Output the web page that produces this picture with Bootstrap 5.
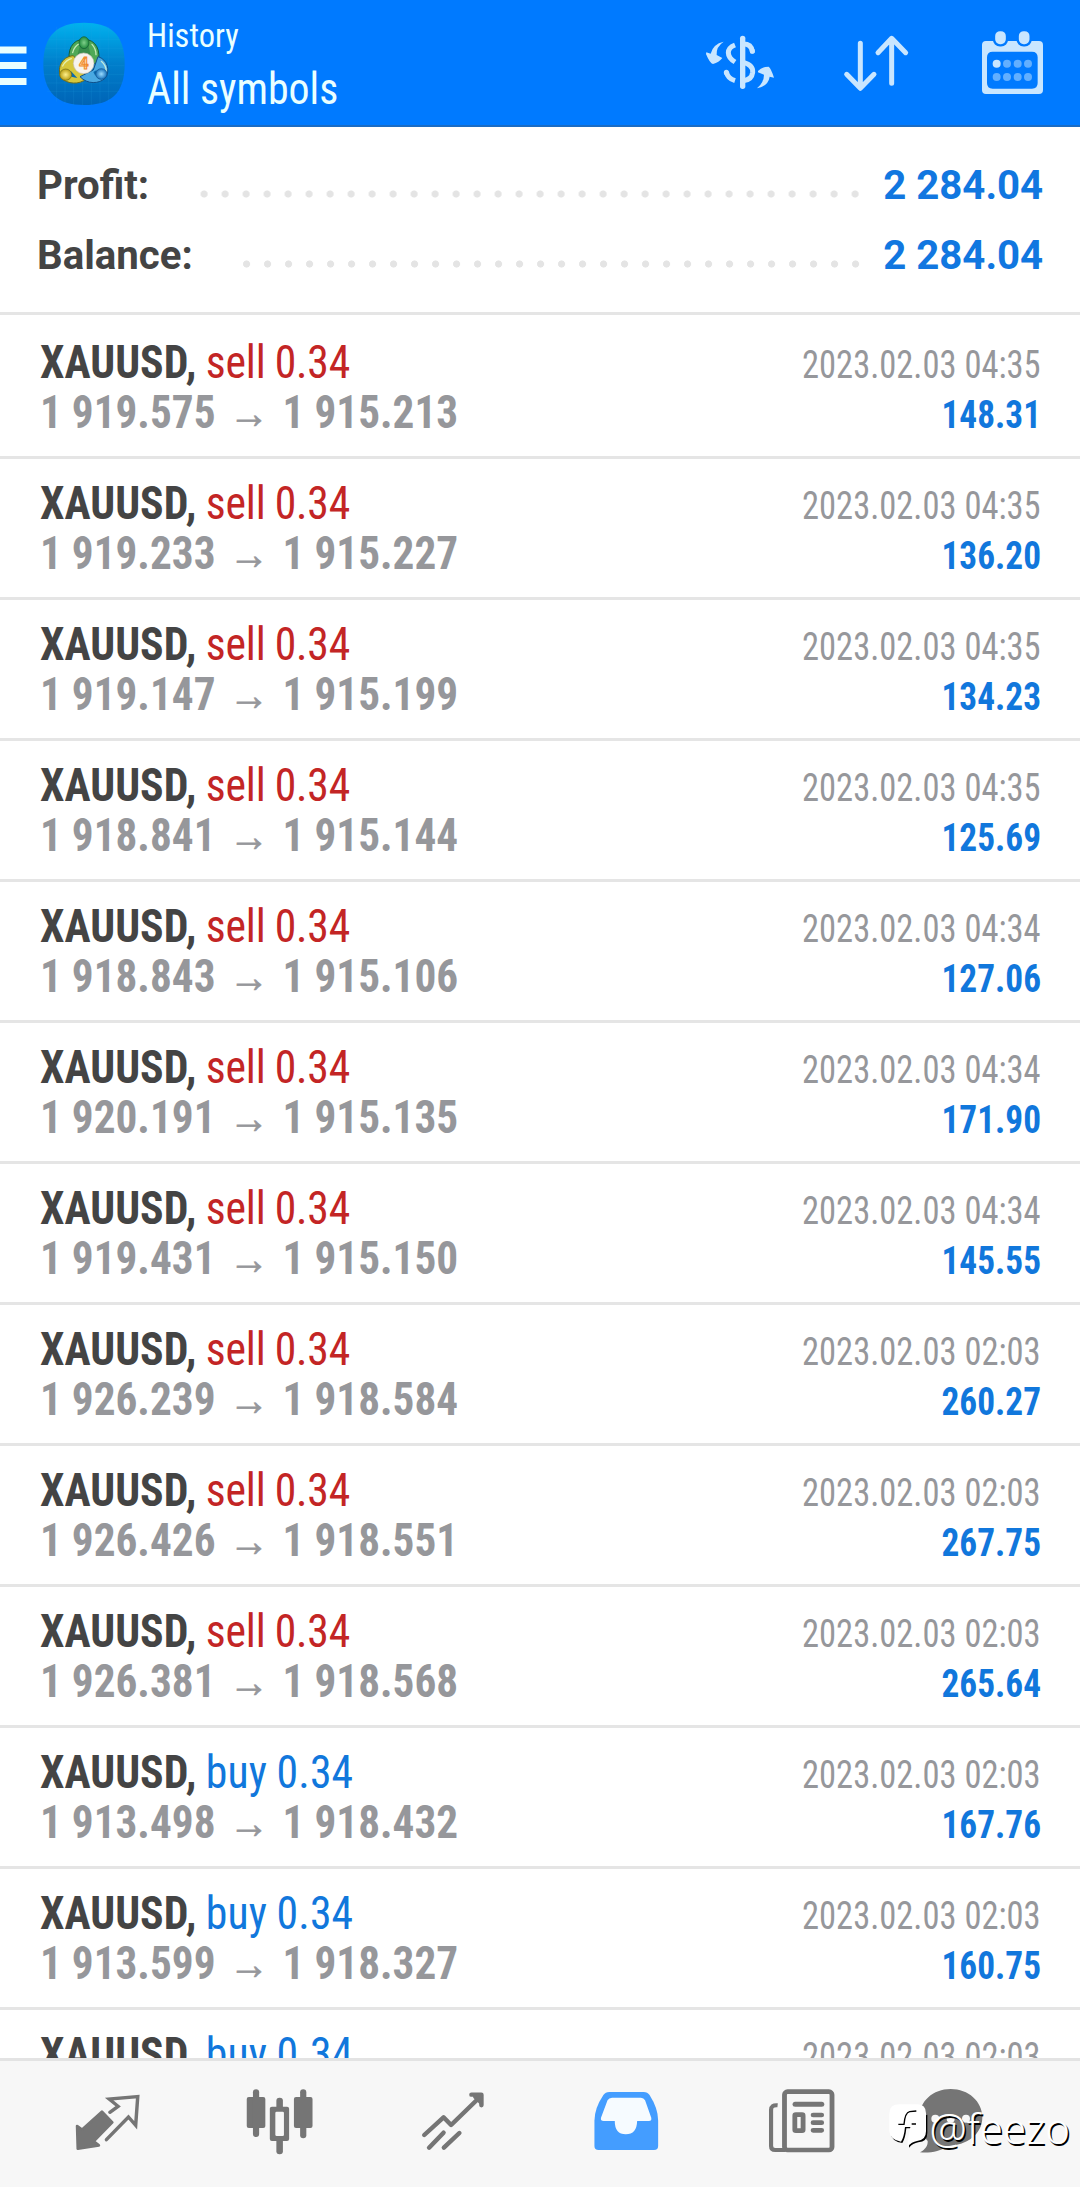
<!DOCTYPE html>
<html lang="en">
<head>
<meta charset="utf-8">
<meta name="viewport" content="width=device-width, initial-scale=1">
<title>History</title>
<link rel="stylesheet" href="https://cdn.jsdelivr.net/npm/bootstrap@5.3.0/dist/css/bootstrap.min.css">
<style>
  body { font-family: Roboto, "Liberation Sans", sans-serif; color: #444; background: #fff; }
  svg { display: block; flex: none; }
  .app { height: 2187px; }
  .topbar { height: 127px; background: #007aff; border-bottom: 2px solid #1b6cc4; color: #eaffff; }
  .narrow { font-stretch: 75%; white-space: nowrap; }
  .titles { margin-left: 19.5px; padding-top: 12px; font-weight: 430; }
  .title-small { font-size: 34px; line-height: 46px; transform: scaleX(.955); transform-origin: left; }
  .title-big { font-size: 45px; line-height: 62px; transform: scaleX(.93); transform-origin: left; }
  .summary { padding: 23px 39px 22px 37px; border-bottom: 3px solid #e5e5e5; font-size: 41px; line-height: 70px; font-weight: 700; }
  .summary .caption-text { transform: scaleX(.98); transform-origin: left; }
  .summary .value { color: #1177e0; width: 161px; transform: scaleX(.98); transform-origin: right; white-space: nowrap; }
  .dots { height: 8px; margin: 39.5px 14px 0 39px; background: radial-gradient(circle at center, #e4e4e4 3.2px, transparent 3.9px) right center / 21px 8px repeat-x; }
  .deals { padding-top: 3px; min-height: 0; }
  .deal { height: 141px; padding: 19px 39px 0 40px; border-bottom: 3px solid #e5e5e5; flex: none; line-height: 50px; }
  .deal-line { height: 50px; }
  .from-left { transform-origin: left; }
  .from-right { transform-origin: right; }
  .symbol { font-size: 47px; transform: scaleX(.93); word-spacing: -.8px; }
  .symbol b { font-weight: 700; }
  .sell { color: #c32525; font-weight: 430; letter-spacing: -.2px; }
  .buy { color: #1177dc; font-weight: 430; letter-spacing: .15px; }
  .prices { font-size: 46px; font-weight: 700; color: #96979b; transform: scaleX(.94); }
  .arrow { width: 71.4px; font-size: 43px; font-weight: 400; -webkit-text-stroke: .7px #96979b; }
  .time { font-size: 39px; color: #96979b; transform: scaleX(.885); }
  .profit { font-size: 38px; font-weight: 700; color: #1177dc; transform: scaleX(.93); }
  .tabs { height: 129px; background: #f7f7f7; border-top: 3px solid #e3e3e3; padding-left: 58px; padding-top: 19px; }
  .tabs svg { margin-right: 73.4px; }
  .tabs svg:nth-child(5) { margin-right: 50px; }
  .tabs svg:last-of-type { margin-right: 0; }
  .watermark { right: 10px; bottom: 32px; height: 54px; color: #fff; font: 300 42px/54px "Noto Sans", sans-serif; text-shadow: 1.5px 1.5px 0 #000; white-space: nowrap; }
</style>
<script src="https://cdn.jsdelivr.net/npm/bootstrap@5.3.0/dist/js/bootstrap.bundle.min.js"></script>
</head>
<body>
<div class="app d-flex flex-column overflow-hidden position-relative">

  <header class="topbar d-flex flex-shrink-0">
    <svg width="27" height="125" viewBox="0 0 27 125" fill="#eaffff"><path d="M0 46.500h26.500v7H0zM0 62h26.500v7H0zM0 78h26.500v7H0z"/></svg>
    <svg width="100" height="125" viewBox="27 0 100 125">
      <defs>
        <linearGradient id="tile" x1="0" y1="0" x2="0" y2="1"><stop offset="0" stop-color="#00b2ee"/><stop offset=".5" stop-color="#007ecb"/><stop offset="1" stop-color="#0064b6"/></linearGradient>
        <radialGradient id="gr"><stop offset="0" stop-color="#7fd08a"/><stop offset="1" stop-color="#1f8a3c"/></radialGradient>
        <radialGradient id="ye"><stop offset="0" stop-color="#fff08a"/><stop offset="1" stop-color="#b79d14"/></radialGradient>
        <radialGradient id="bl"><stop offset="0" stop-color="#9adcff"/><stop offset="1" stop-color="#1873bd"/></radialGradient>
      </defs>
      <g transform="translate(30 10) scale(.33333)">
        <path d="M162 38C240 38 284 70 284 162S240 285 162 285 40 250 40 162 84 38 162 38Z" fill="url(#tile)"/>
        <path d="M80 50V275M105 42V282M131 40V285M158 40V285M184 40V285M210 42V282M236 50V275M45 115H280M41 141H283M41 167H283M41 193H283M45 219H279M52 244H270M55 88H270M75 63H250" stroke="#27a4df" stroke-opacity=".25" stroke-width="2" fill="none"/>
        <g stroke-width="3">
          <path d="M162 88C198 88 214 122 204 160H120C110 122 126 88 162 88Z" fill="#4fa957" stroke="#145c35"/>
          <path d="M130 137C92 140 80 178 94 204C112 222 146 226 170 206L150 160Z" fill="#d6c73c" stroke="#6d6a18"/>
          <path d="M204 140C232 148 242 182 226 204C208 222 172 224 150 200L190 180Z" fill="#4aa9e2" stroke="#0f4f8a"/>
        </g>
        <path d="M128 128Q134 106 150 101M98 168Q108 150 124 146M214 154Q230 168 228 184M186 103Q198 116 198 134" fill="none" stroke="#eaffd8" stroke-opacity=".75" stroke-width="4" stroke-linecap="round"/>
        <path d="M122 182L142 204L124 200ZM190 186L200 180L196 198Z" fill="#0b6bb0"/>
        <path d="M150 106h25l8 34h-42z" fill="#398e4c"/>
        <ellipse cx="162" cy="98" rx="15" ry="18" fill="url(#gr)" stroke="#145c35" stroke-width="2"/>
        <ellipse cx="107" cy="194" rx="18" ry="17" fill="url(#ye)" stroke="#6d6a18" stroke-width="2"/>
        <ellipse cx="214" cy="192" rx="17" ry="16" fill="url(#bl)" stroke="#0f4f8a" stroke-width="2"/>
        <circle cx="161" cy="160" r="31" fill="#f6f3ee" stroke="#c9c3b6" stroke-width="2"/>
        <text x="161" y="178" text-anchor="middle" font-family="Roboto" font-weight="700" font-size="50" fill="#ffd9a8" stroke="#f08a2c" stroke-width="3">4</text>
      </g>
    </svg>
    <div class="titles narrow">
      <div class="title-small">History</div>
      <div class="title-big">All symbols</div>
    </div>
    <svg class="ms-auto" width="400" height="125" viewBox="680 0 400 125">
      <g transform="translate(680 0) scale(.33333)" fill="#c9e6ff">
        <g transform="translate(60 75)" fill="none" stroke="#c9e6ff" stroke-width="15">
          <path d="M128 40V184" stroke-width="16" stroke-linecap="round"/>
          <path d="M105 60Q85 68 85 83T105 111"/>
          <path d="M79 140Q83 160 105 167"/>
          <path d="M130 57Q154 57 157 79" stroke-linecap="round"/>
          <path d="M130 112Q160 120 158 142Q155 165 130 167"/>
          <path d="M79 142v1M157 77v1" stroke-linecap="round"/>
          <path d="M71 50Q48 65 50 90L67 99Q57 112 39 117Q30 116 18 87L19 82L32 86Q39 57 71 50Z" fill="#c9e6ff" stroke="none"/>
          <path d="M171 190Q192 172 192 149L174 142V138Q187 125 206 125Q213 130 222 158L209 155Q205 183 171 190Z" fill="#c9e6ff" stroke="none"/>
        </g>
        <g fill="none" stroke="#c9e6ff" stroke-width="15" stroke-linecap="round" stroke-linejoin="round">
          <path d="M541 130V264M500 223L541 265L582 223M635 250V116M594 158L635 115L677 158"/>
        </g>
        <path fill-rule="evenodd" d="M918 123H1077Q1089 123 1089 135V270Q1089 282 1077 282H918Q906 282 906 270V135Q906 123 918 123ZM938 155Q921 155 921 172V249Q921 266 938 266H1056Q1073 266 1073 249V172Q1073 155 1056 155Z"/>
        <rect x="942" y="90" width="39" height="46" rx="18" stroke="#007aff" stroke-width="7"/>
        <rect x="1013" y="90" width="39" height="46" rx="18" stroke="#007aff" stroke-width="7"/>
        <g fill="#62afff"><circle cx="981" cy="191" r="12"/><circle cx="1013" cy="191" r="12"/><circle cx="1044" cy="191" r="12"/><circle cx="950" cy="231" r="12"/><circle cx="981" cy="231" r="12"/><circle cx="1013" cy="231" r="12"/><circle cx="1044" cy="231" r="12"/></g>
        <circle cx="950" cy="191" r="12"/>
      </g>
    </svg>
  </header>

  <section class="summary flex-shrink-0">
    <div class="d-flex"><span class="caption-text">Profit:</span><span class="dots flex-grow-1"></span><span class="value text-end">2 284.04</span></div>
    <div class="d-flex"><span class="caption-text">Balance:</span><span class="dots flex-grow-1"></span><span class="value text-end">2 284.04</span></div>
  </section>

  <main class="deals narrow d-flex flex-column flex-grow-1 overflow-hidden" id="deals"></main>

  <nav class="tabs d-flex flex-shrink-0">
    <svg width="100" height="90" viewBox="58 80 100 90"><g transform="scale(.34436 .33333)" fill="#757575">
      <path d="M296 335L326 367L272 424L287 436L226 446L224 378L238 389Z" stroke="#757575" stroke-width="8" stroke-linejoin="round"/>
      <path d="M319 337L343 319L317 297L400 290L394 376L373 351L309 419" fill="none" stroke="#757575" stroke-width="10" stroke-linecap="round"/>
    </g></svg>
    <svg width="100" height="90" viewBox="231.500 80 100 90"><g transform="scale(.34436 .33333)" fill="#757575">
      <rect x="718" y="291" width="54" height="93" rx="6"/><rect x="736" y="268" width="18" height="143" rx="9"/>
      <rect x="855" y="291" width="54" height="93" rx="6"/><rect x="873" y="268" width="18" height="147" rx="9"/>
      <rect x="804" y="293" width="19" height="170" rx="9"/><rect x="785" y="320" width="56" height="103" rx="6"/><rect x="801" y="335" width="25" height="73" rx="4" fill="#f7f7f7"/>
    </g></svg>
    <svg width="100" height="90" viewBox="405 80 100 90"><g transform="scale(.34436 .33333)" fill="none" stroke="#757575" stroke-width="13" stroke-linecap="round" stroke-linejoin="round">
      <path d="M1232 405L1288 352L1310 375L1396 289M1246 443L1288 398M1289 443L1334 399"/><path d="M1369 284H1398V316"/><path d="M1380 290L1396 306V287Z"/>
    </g></svg>
    <svg width="100" height="90" viewBox="579 80 100 90"><g transform="translate(540) scale(.34436 .33333)">
      <path d="M204 276H304Q315 276 321 285Q346 325 346 362V438Q346 450 334 450H173Q161 450 161 438V362Q161 325 187 285Q193 276 204 276Z" fill="#449dff"/>
      <path d="M212 293H296Q304 293 308 301L326 353Q328 363 319 363H285Q284 403 252 403T220 363H188Q178 363 180 353L199 301Q203 293 212 293Z" fill="#f6fbff"/>
    </g></svg>
    <svg width="100" height="90" viewBox="752 80 100 90"><g transform="translate(540) scale(.34436 .33333)" fill="none" stroke="#757575" stroke-width="14">
      <rect x="710" y="275" width="138" height="175" rx="9"/><path d="M690 316Q671 314 671 330V438Q671 450 683 450H712" stroke-width="12"/>
      <path d="M741 313H818" stroke-linecap="round" stroke-width="15"/><path d="M793 345H818M793 368H818M793 391H818" stroke-linecap="round"/><rect x="740" y="344" width="24" height="48" rx="3"/>
    </g></svg>
    <svg width="100" height="90" viewBox="902 80 100 90"><g transform="translate(880 80) scale(.33333)">
      <path d="M212 27C265 27 307 64 307 112C307 165 258 196 205 198C180 214 150 220 120 217C137 208 144 196 143 183C125 165 118 140 118 112C118 64 159 27 212 27Z" fill="#757575"/>
      <g fill="#f7f7f7"><circle cx="166" cy="116" r="12"/><circle cx="212" cy="116" r="12"/><circle cx="258" cy="116" r="12"/></g>
    </g></svg>
    <div class="watermark position-absolute d-flex">
      <svg width="42" height="54" viewBox="887 105 42 54"><g transform="translate(880 80) scale(.33333)">
        <path d="M135 112V166Q135 193 108 195Q92 198 80 211V196L88 153H72Q69 184 60 197Q27 192 25 166V150Z" fill="#000" transform="translate(4 4)"/>
        <path d="M55 85H108Q135 85 135 112V166Q135 193 108 195Q92 198 80 211V196L88 153H72Q69 184 60 197Q27 192 25 166V112Q25 85 55 85Z" fill="#fff"/>
        <path d="M52 145H69Q72 110 86 107L106 105M92 144H105" fill="none" stroke="#000" stroke-width="4"/>
      </g></svg><span>@feezo</span>
    </div>
  </nav>
</div>

<script>
  const deals = [
    ['sell', '1 919.575', '1 915.213', '04:35', '148.31'],
    ['sell', '1 919.233', '1 915.227', '04:35', '136.20'],
    ['sell', '1 919.147', '1 915.199', '04:35', '134.23'],
    ['sell', '1 918.841', '1 915.144', '04:35', '125.69'],
    ['sell', '1 918.843', '1 915.106', '04:34', '127.06'],
    ['sell', '1 920.191', '1 915.135', '04:34', '171.90'],
    ['sell', '1 919.431', '1 915.150', '04:34', '145.55'],
    ['sell', '1 926.239', '1 918.584', '02:03', '260.27'],
    ['sell', '1 926.426', '1 918.551', '02:03', '267.75'],
    ['sell', '1 926.381', '1 918.568', '02:03', '265.64'],
    ['buy', '1 913.498', '1 918.432', '02:03', '167.76'],
    ['buy', '1 913.599', '1 918.327', '02:03', '160.75'],
    ['buy', '', '', '02:03', '']
  ];
  document.getElementById('deals').innerHTML = deals.map(([side, open, close, time, profit]) => `
    <article class="deal">
      <div class="deal-line d-flex justify-content-between align-items-baseline">
        <div class="symbol from-left"><b>XAUUSD,</b> <span class="${side}">${side} 0.34</span></div>
        <div class="time from-right">2023.02.03 ${time}</div>
      </div>
      ${open && `<div class="deal-line d-flex justify-content-between align-items-baseline">
        <div class="prices from-left d-flex align-items-baseline"><span>${open}</span><span class="arrow text-center">→</span><span>${close}</span></div>
        <div class="profit from-right">${profit}</div>
      </div>`}
    </article>`).join('');
</script>
</body>
</html>
